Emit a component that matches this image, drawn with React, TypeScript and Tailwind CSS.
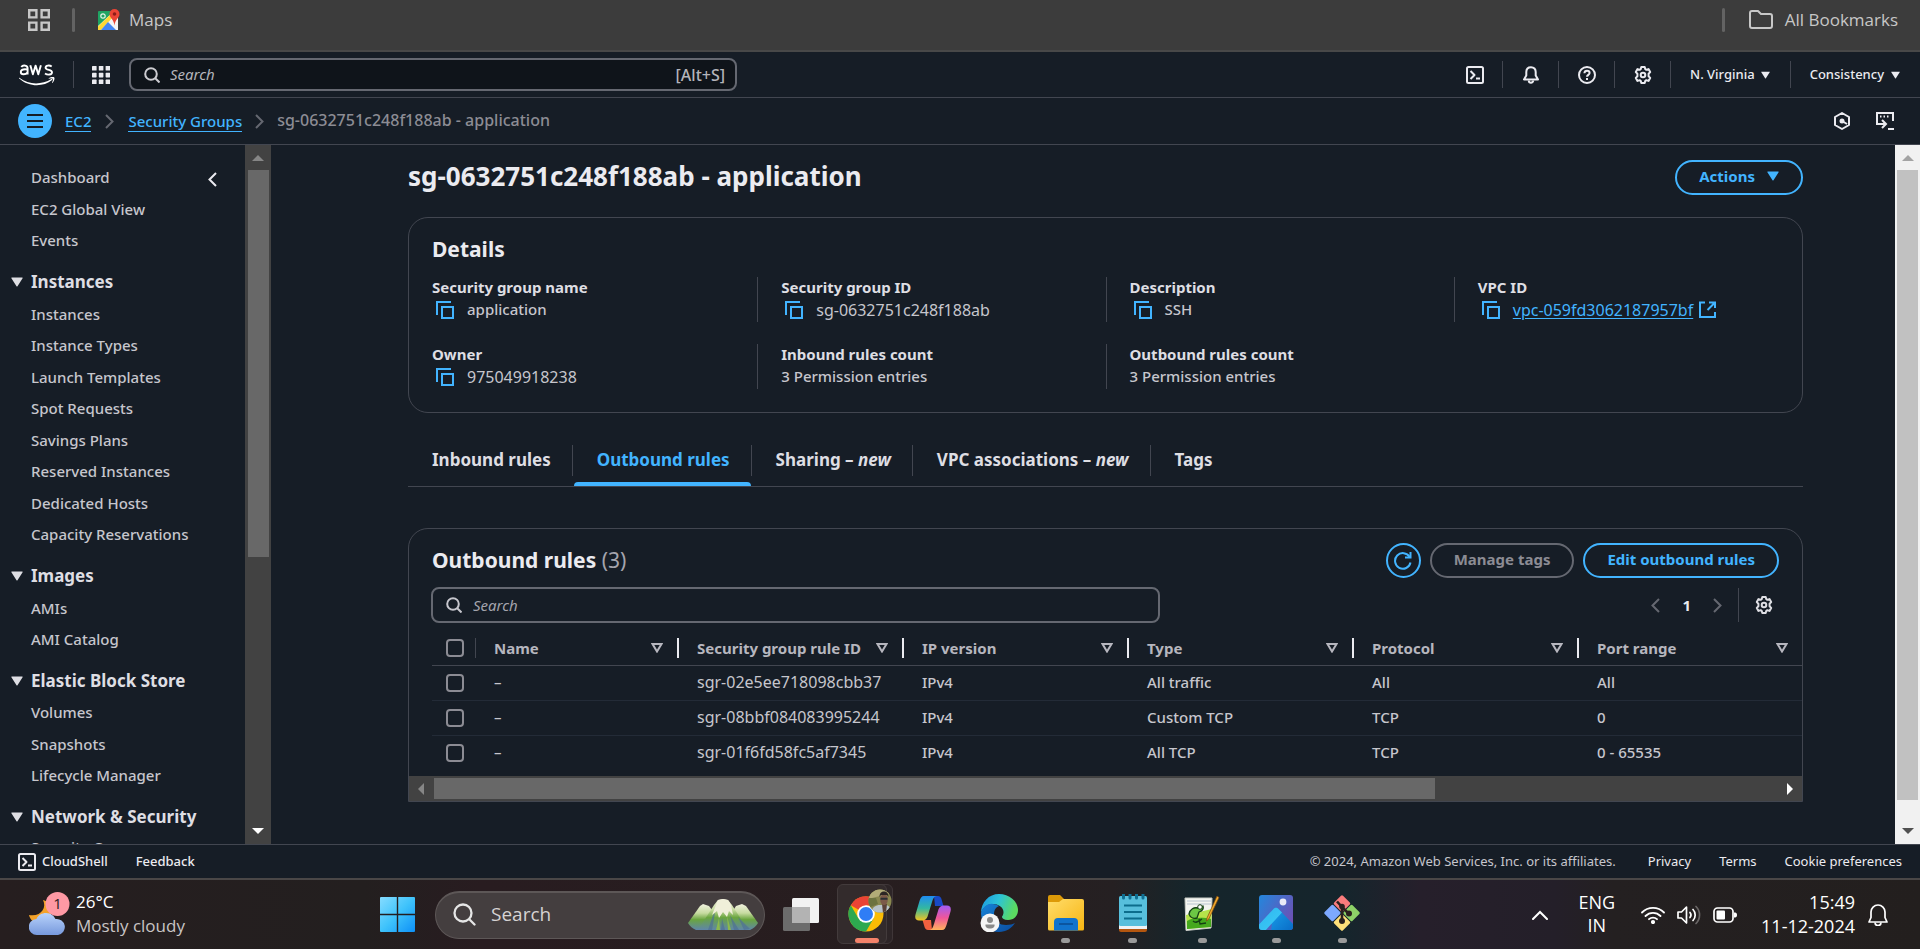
import React from "react";

const navGroups = [
  {
    title: "Instances",
    height: "h-[252px]",
    items: [
      "Instances",
      "Instance Types",
      "Launch Templates",
      "Spot Requests",
      "Savings Plans",
      "Reserved Instances",
      "Dedicated Hosts",
      "Capacity Reservations",
    ],
  },
  { title: "Images", height: "h-[63px]", items: ["AMIs", "AMI Catalog"] },
  { title: "Elastic Block Store", height: "h-[94px]", items: ["Volumes", "Snapshots", "Lifecycle Manager"] },
  { title: "Network & Security", height: "h-[28px]", items: ["Security Groups"] },
];

const columns = ["Name", "Security group rule ID", "IP version", "Type", "Protocol", "Port range"];

const rules = [
  ["–", "sgr-02e5ee718098cbb37", "IPv4", "All traffic", "All", "All"],
  ["–", "sgr-08bbf084083995244", "IPv4", "Custom TCP", "TCP", "0"],
  ["–", "sgr-01f6fd58fc5af7345", "IPv4", "All TCP", "TCP", "0 - 65535"],
];

type IconProps = { className?: string };

function Caret({ className = "" }: IconProps) {
  return (
    <svg viewBox="0 0 12 10" className={className} fill="currentColor" aria-hidden="true">
      <path d="M.8.5h10.4a.5.5 0 0 1 .4.8L6.5 9.2a.6.6 0 0 1-1 0L.4 1.300a.5.5 0 0 1 .4-.8Z" />
    </svg>
  );
}

function ScrollArrow({ className = "" }: IconProps) {
  return (
    <svg viewBox="0 0 12 6" className={className} fill="currentColor" aria-hidden="true">
      <path d="M0 0h12L6 6Z" />
    </svg>
  );
}

function Filter() {
  return (
    <svg viewBox="0 0 12 11" className="h-[11px] w-3 shrink-0" fill="none" stroke="#b6b6be" strokeWidth="2" aria-hidden="true">
      <path d="M1.500 2h9L6 9.500Z" />
    </svg>
  );
}

function SearchIcon({ className = "" }: IconProps) {
  return (
    <svg viewBox="0 0 16 16" className={className} fill="none" stroke="currentColor" strokeWidth="2" aria-hidden="true">
      <circle cx="7" cy="7" r="5.800" />
      <path d="m11 11 4.500 4.500" />
    </svg>
  );
}

function ShellIcon() {
  return (
    <svg viewBox="0 0 18 18" className="size-[18px] shrink-0" fill="none" stroke="currentColor" strokeWidth="2" strokeLinejoin="round" aria-hidden="true">
      <rect x="1" y="1" width="16" height="16" rx="1.500" />
      <path d="m4.500 5 4 4-4 4M10 12.500h4" />
    </svg>
  );
}

function BellIcon() {
  return (
    <svg viewBox="0 0 18 18" className="size-[18px]" fill="none" stroke="currentColor" strokeWidth="2" strokeLinejoin="round" aria-hidden="true">
      <path d="M9 1.200C6 1.200 4.300 3.200 4.300 6v3.500L2 13.500h14l-2.300-4V6C13.700 3.200 12 1.200 9 1.200Z" />
      <path d="M6.800 14.500a2.200 2.200 0 0 0 4.400 0" />
    </svg>
  );
}

function HelpIcon() {
  return (
    <svg viewBox="0 0 18 18" className="size-[18px]" fill="none" stroke="currentColor" strokeWidth="2" aria-hidden="true">
      <circle cx="9" cy="9" r="8" />
      <path d="M6.400 7.200C6.500 5.500 7.600 4.700 9 4.700s2.600.9 2.600 2.300c0 1.800-2.600 1.900-2.600 3.800" />
      <path d="M9 12v2" />
    </svg>
  );
}

function GearIcon() {
  return (
    <svg viewBox="0 0 18 18" className="size-[18px]" fill="none" stroke="currentColor" strokeWidth="2" strokeLinejoin="round" aria-hidden="true">
      <path d="M7.300 1h3.400l.6 2.200 1 .6 2.200-.7 1.700 3-1.600 1.600v2.600l1.600 1.600-1.700 3-2.200-.7-1 .6-.6 2.200H7.300l-.6-2.200-1-.6-2.200.7-1.700-3 1.600-1.600V7.700L1.800 6.100l1.700-3 2.200.7 1-.6Z" />
      <circle cx="9" cy="9" r="2.300" />
    </svg>
  );
}

function Chevron({ className = "", flip = false }: IconProps & { flip?: boolean }) {
  return (
    <svg viewBox="0 0 9 15" className={className} fill="none" stroke="currentColor" strokeWidth="2" aria-hidden="true">
      <path d={flip ? "M8 1 1.500 7.500 8 14" : "m1 1 6.500 6.500L1 14"} />
    </svg>
  );
}

function CopyButton({ label }: { label: string }) {
  return (
    <button type="button" aria-label={label} className="shrink-0 text-[#42b4ff]">
      <svg viewBox="0 0 18 18" className="size-[18px]" fill="none" stroke="currentColor" strokeWidth="2" aria-hidden="true">
        <path d="M1 14V1h14" />
        <path d="M6 6h11v11H6Z" />
      </svg>
    </button>
  );
}

function BookmarksBar() {
  return (
    <div className="flex h-[52px] shrink-0 items-start border-b-2 border-[#484848] bg-[#3c3c3c] pt-2 font-['Open_Sans',sans-serif] text-[17px] leading-6 text-[#c7c7c7]">
      <button type="button" aria-label="Apps" className="ml-7">
        <svg viewBox="0 0 22 22" className="mt-px size-[22px]" fill="none" stroke="#c7c7c7" strokeWidth="2.400" aria-hidden="true">
          <path d="M1.200 1.200h7.200v7.200H1.200ZM13.600 1.200h7.200v7.200h-7.200ZM1.200 13.600h7.200v7.200H1.200ZM13.600 13.600h7.200v7.200h-7.200Z" />
        </svg>
      </button>
      <span className="ml-[22px] h-6 w-[3px] rounded bg-[#636363]" />
      <a href="#maps" className="ml-[23px] flex items-center gap-[9px]">
        <svg viewBox="0 0 22 22" className="size-[22px]" aria-hidden="true">
          <rect x="0" y="2" width="20" height="19" rx="1" fill="#1fa463" />
          <path d="M0 21V17L14 4l6 5v12Z" fill="#f4f4f4" />
          <path d="M0 17.500 13 5l2 3L3 21H0Z" fill="#fdd835" />
          <path d="m3 21 7-8 8 8Z" fill="#4285f4" />
          <circle cx="5" cy="7" r="2.200" fill="none" stroke="#dff3e6" strokeWidth="1.200" />
          <path d="M16.500 0a5 5 0 0 1 5 5c0 4-4.300 5-5 11.500C15.800 10 11.500 9 11.500 5a5 5 0 0 1 5-5Z" fill="#e94435" />
          <circle cx="16.500" cy="5" r="1.800" fill="#8c1d18" />
        </svg>
        Maps
      </a>
      <span className="ml-auto h-6 w-[3px] rounded bg-[#636363]" />
      <a href="#bookmarks" className="mr-[22px] ml-6 flex items-center gap-3">
        <svg viewBox="0 0 24 20" className="h-5 w-6" fill="none" stroke="#c7c7c7" strokeWidth="2" strokeLinejoin="round" aria-hidden="true">
          <path d="M1 3a2 2 0 0 1 2-2h6l3 3h9a2 2 0 0 1 2 2v10a2 2 0 0 1-2 2H3a2 2 0 0 1-2-2Z" />
        </svg>
        All Bookmarks
      </a>
    </div>
  );
}

function AwsNav() {
  const cell = "flex h-[27px] w-14 items-center justify-center border-r border-[#424650]";
  return (
    <header className="flex h-[46px] shrink-0 items-center border-b border-[#424650] text-[13px] text-[#ebebf0]">
      <a href="#home" aria-label="AWS" className="ml-[19px]">
        <svg viewBox="0 0 36 24" className="h-6 w-9" aria-hidden="true">
          <g fill="none" stroke="#fff" strokeWidth="1.900" strokeLinejoin="round">
            <path d="M2.300 4C3.200 2.700 5 2.300 6.500 2.700 8 3 8.600 4 8.600 5.500V11.500M8.600 6.600C6 6 1.800 6.200 1.800 9c0 3 5 3 6.800.2" />
            <path d="m11.300 2.300 2.600 9 2.700-8.700 2.700 8.700 2.600-9" />
            <path d="M32.700 3.500C30.500 2 26.500 2.300 26.600 4.700c.1 2.800 6.400 1.600 6.400 4.500 0 2.800-4.500 3-7 1.200" />
          </g>
          <path d="M.4 14.800c9.600 7.300 22.200 7.200 32 1.200.8-.4 1.400.5.700 1.100C24 24.500 9.500 24 .2 15.500c-.4-.4-.2-.9.2-.7Z" fill="#fff" />
          <path d="M29.700 15.200c1.800-1.300 5-1.500 5.600-.8.6.8-.1 4-1.900 5.500-.3.200-.5.100-.4-.2.500-1.200 1.200-3.300.8-3.800-.5-.6-2.700-.3-3.900-.2-.4 0-.4-.3-.2-.5Z" fill="#fff" />
        </svg>
      </a>
      <span className="ml-[18px] h-[27px] w-px bg-[#424650]" />
      <button type="button" aria-label="Services" className="ml-[18px]">
        <svg viewBox="0 0 18 18" className="size-[18px]" fill="#ebebf0" aria-hidden="true">
          {[0, 6.800, 13.600].map((y) => [0, 6.800, 13.600].map((x) => <rect key={`${x}-${y}`} x={x} y={y} width="4.600" height="4.600" rx=".6" />))}
        </svg>
      </button>
      <label className="ml-[19px] flex h-[33px] w-[608px] items-center rounded-lg border-2 border-[#656871] bg-[#0f141a] pr-2.5 pl-[11px] text-[15px] text-[#b4b4bb]">
        <SearchIcon className="ml-0.5 size-4 shrink-0 text-[#ccccd1]" />
        <input aria-label="Search services" placeholder="Search" className="ml-2.5 min-w-0 flex-1 bg-transparent placeholder:text-[#b4b4bb] placeholder:italic focus:outline-none" />
        <span className="text-base font-medium">[Alt+S]</span>
      </label>
      <div className="ml-auto flex items-center font-medium">
        <button type="button" aria-label="CloudShell" className={cell}><ShellIcon /></button>
        <button type="button" aria-label="Notifications" className={cell}><BellIcon /></button>
        <button type="button" aria-label="Help" className={cell}><HelpIcon /></button>
        <button type="button" aria-label="Settings" className={cell}><GearIcon /></button>
        <button type="button" className="flex h-[27px] items-center gap-1.5 border-r border-[#424650] pr-5 pl-[19px]">
          N. Virginia <Caret className="h-2 w-[9px]" />
        </button>
        <button type="button" className="flex items-center gap-[7px] pr-5 pl-[19px]">
          Consistency <Caret className="h-2 w-[9px]" />
        </button>
      </div>
    </header>
  );
}

function Breadcrumbs() {
  return (
    <nav aria-label="Breadcrumb" className="flex h-[47px] shrink-0 items-center border-b border-[#424650] text-[15px] font-medium text-[#ebebf0]">
      <button type="button" aria-label="Menu" className="ml-[18px] flex size-[34px] items-center justify-center rounded-full bg-[#42b4ff] text-[#161d26]">
        <svg viewBox="0 0 16 14" className="h-[14px] w-4" stroke="currentColor" strokeWidth="2" aria-hidden="true">
          <path d="M0 1h16M0 7h16M0 13h16" />
        </svg>
      </button>
      <a href="#ec2" className="ml-[13px] border-b border-[#42b4ff] leading-5 text-[#42b4ff]">EC2</a>
      <Chevron className="mx-[14px] h-[15px] w-[9px] text-[#656871]" />
      <a href="#groups" className="border-b border-[#42b4ff] leading-5 text-[#42b4ff]">Security Groups</a>
      <Chevron className="mx-[13px] h-[15px] w-[9px] text-[#656871]" />
      <span className="pb-0.5 text-base text-[#8c8c94]">sg-0632751c248f188ab - application</span>
      <button type="button" aria-label="Assistant" className="ml-auto">
        <svg viewBox="0 0 18 18" className="size-[18px]" fill="none" stroke="currentColor" strokeWidth="2" strokeLinejoin="round" aria-hidden="true">
          <path d="m9 1 7 4v8l-7 4-7-4V5Z" />
          <path d="m9 9 5 3" />
          <circle cx="9" cy="9" r="1.500" fill="currentColor" />
        </svg>
      </button>
      <button type="button" aria-label="Open console" className="mr-[26px] ml-[25px]">
        <svg viewBox="0 0 18 18" className="size-[18px]" fill="none" stroke="currentColor" strokeWidth="2" aria-hidden="true">
          <path d="M17 9V1H1v11h8" />
          <path d="M4 4.500h1.500M7.500 4.500H9M11 4.500h1.500" />
          <path d="m6 8 4 4-4 4M12 17h6" />
        </svg>
      </button>
    </nav>
  );
}

function Sidebar() {
  return (
    <div className="flex shrink-0">
      <aside className="w-[245px] overflow-hidden pt-[17px] text-[15px] font-medium text-[#c6c6cd]">
        <div className="flex justify-between pl-[31px]">
          <ul className="grid h-[94px] auto-rows-fr items-center">
            <li><a href="#dashboard">Dashboard</a></li>
            <li><a href="#global">EC2 Global View</a></li>
            <li><a href="#events">Events</a></li>
          </ul>
          <button type="button" aria-label="Collapse navigation" className="mt-[9px] mr-7 h-4 text-[#ebebf0]">
            <Chevron flip className="h-[15px] w-[9px]" />
          </button>
        </div>
        {navGroups.map((group) => (
          <section key={group.title} className="mt-[9px]">
            <button type="button" className="flex h-[33px] w-full items-center gap-2 pl-[11px] text-[17px] font-bold text-[#dedee3]">
              <Caret className="h-[10px] w-3" />
              {group.title}
            </button>
            <ul className={`grid auto-rows-fr items-center pl-[31px] ${group.height}`}>
              {group.items.map((item) => (
                <li key={item}><a href={`#${item}`}>{item}</a></li>
              ))}
            </ul>
          </section>
        ))}
      </aside>
      <div className="flex w-[26px] flex-col items-center bg-[#424242] py-[10px]">
        <ScrollArrow className="h-1.5 w-3 shrink-0 rotate-180 text-[#868686]" />
        <div className="mt-[9px] h-[387px] w-[21px] bg-[#686868]" />
        <ScrollArrow className="mt-auto h-1.5 w-3 shrink-0 text-white" />
      </div>
    </div>
  );
}

function Detail({ label, divided = false, children }: { label: string; divided?: boolean; children: React.ReactNode }) {
  return (
    <div className={`h-[45px] pl-[23px] ${divided ? "border-l border-[#424650]" : ""}`}>
      <dt className="font-bold leading-5 text-[#dedee3]">{label}</dt>
      <dd className="flex h-[25px] items-center font-medium">{children}</dd>
    </div>
  );
}

function Details() {
  const value = "flex items-center gap-[13px] pl-1";
  return (
    <section className="mt-[22px] rounded-[20px] border border-[#424650] pt-[19px] pb-[23px]">
      <h2 className="pl-[23px] text-[21px] leading-6 font-bold text-[#ebebf0]">Details</h2>
      <dl className="mt-4 grid grid-cols-4 gap-y-[22px]">
        <Detail label="Security group name">
          <span className={value}><CopyButton label="Copy name" />application</span>
        </Detail>
        <Detail label="Security group ID" divided>
          <span className={`${value} text-base font-normal`}><CopyButton label="Copy ID" />sg-0632751c248f188ab</span>
        </Detail>
        <Detail label="Description" divided>
          <span className={value}><CopyButton label="Copy description" />SSH</span>
        </Detail>
        <Detail label="VPC ID" divided>
          <span className={`${value} text-base font-normal`}>
            <CopyButton label="Copy VPC ID" />
            <a href="#vpc" className="flex items-center gap-1.5 text-[#42b4ff] underline underline-offset-2">
              vpc-059fd3062187957bf
              <svg viewBox="0 0 17 17" className="size-[17px]" fill="none" stroke="currentColor" strokeWidth="2" aria-hidden="true">
                <path d="M6 1.500H1V16h15v-5" />
                <path d="M10 1.500h6V7M16 1.500 8.500 9" />
              </svg>
            </a>
          </span>
        </Detail>
        <Detail label="Owner">
          <span className={`${value} text-base font-normal`}><CopyButton label="Copy owner" />975049918238</span>
        </Detail>
        <Detail label="Inbound rules count" divided>3 Permission entries</Detail>
        <Detail label="Outbound rules count" divided>3 Permission entries</Detail>
      </dl>
    </section>
  );
}

function Tabs() {
  const tab = "relative flex h-[50px] items-center pr-[22px] pb-0.5 pl-6 after:absolute after:top-[9px] after:right-0 after:h-[31px] after:w-px after:bg-[#424650]";
  return (
    <div role="tablist" className="mt-[23px] flex border-b border-[#424650] text-[17px] font-bold text-[#dedee3]">
      <button type="button" role="tab" className={tab}>Inbound rules</button>
      <button type="button" role="tab" aria-selected="true" className={`${tab} text-[#42b4ff]`}>
        Outbound rules
        <span className="absolute inset-x-px bottom-0 h-1 rounded-t bg-[#42b4ff]" />
      </button>
      <button type="button" role="tab" className={tab}>
        <span>Sharing – <em>new</em></span>
      </button>
      <button type="button" role="tab" className={tab}>
        <span>VPC associations – <em>new</em></span>
      </button>
      <button type="button" role="tab" className="px-6 pb-0.5">Tags</button>
    </div>
  );
}

function Rules() {
  const box = "block size-[18px] appearance-none rounded-[4px] border-2 border-[#8c8c94]";
  return (
    <section className="mt-[41px] overflow-hidden rounded-t-[20px] border border-[#424650]">
      <div className="flex items-center gap-[9px] pt-[14px] pr-[23px] pl-[23px] text-[15px] font-bold">
        <h2 className="mr-auto pb-0.5 text-[21px] leading-7 text-[#ebebf0]">
          Outbound rules <span className="font-normal text-[#a4a4ad]">(3)</span>
        </h2>
        <button type="button" aria-label="Refresh" className="flex size-[35px] items-center justify-center rounded-full border-2 border-[#42b4ff] text-[#42b4ff]">
          <svg viewBox="0 0 18 18" className="size-[18px]" fill="none" stroke="currentColor" strokeWidth="2" aria-hidden="true">
            <path d="M16.500 10.500A7.800 7.800 0 1 1 15.600 5" />
            <path d="M11 5.500h5.500V0" />
          </svg>
        </button>
        <button type="button" className="h-[35px] rounded-full border-2 border-[#656871] px-[22px] pb-0.5 text-[#8c8c94]">Manage tags</button>
        <button type="button" className="h-[35px] rounded-full border-2 border-[#42b4ff] px-[22px] pb-0.5 text-[#42b4ff]">Edit outbound rules</button>
      </div>
      <div className="mt-[9px] flex items-center pr-[29px] pl-[22px]">
        <label className="flex h-9 min-w-0 basis-[729px] items-center rounded-lg border-2 border-[#656871] px-[13px] text-[#a4a4ad]">
          <SearchIcon className="size-4 shrink-0 text-[#c6c6cd]" />
          <input aria-label="Search rules" placeholder="Search" className="ml-[11px] min-w-0 flex-1 bg-transparent placeholder:text-[#a4a4ad] placeholder:italic focus:outline-none" />
        </label>
        <button type="button" aria-label="Previous page" className="ml-auto text-[#656871]"><Chevron flip className="h-[15px] w-[9px]" /></button>
        <button type="button" className="mx-[22px] font-bold text-[#ebebf0]">1</button>
        <button type="button" aria-label="Next page" className="text-[#656871]"><Chevron className="h-[15px] w-[9px]" /></button>
        <span className="mr-4 ml-4 h-[34px] w-px bg-[#424650]" />
        <button type="button" aria-label="Preferences" className="text-[#dedee3]"><GearIcon /></button>
      </div>
      <div className="mt-2 pl-[23px]">
        <table className="w-full table-fixed border-collapse text-left">
          <colgroup>
            <col className="w-[44px]" />
            <col className="w-[203px]" />
            <col className="w-[225px]" />
            <col className="w-[225px]" />
            <col className="w-[225px]" />
            <col className="w-[225px]" />
            <col />
          </colgroup>
          <thead>
            <tr className="h-[34px] border-b border-[#424650] text-[#b6b6be]">
              <th className="p-0">
                <div className="flex h-5 items-center border-r border-[#424650] pl-[14px]">
                  <input type="checkbox" aria-label="Select all rules" className={box} />
                </div>
              </th>
              {columns.map((c, i) => (
                <th key={c} className="p-0 font-bold">
                  <div className={`flex h-5 items-center justify-between pr-[14px] pl-[18px] ${i < columns.length - 1 ? "border-r-2 border-[#ebebf0]" : ""}`}>
                    {c}
                    <Filter />
                  </div>
                </th>
              ))}
            </tr>
          </thead>
          <tbody className="font-medium">
            {rules.map((row) => (
              <tr key={row[1]} className="h-[35px] border-b border-[#232b37] last:border-b-0">
                <td className="p-0 pl-[14px]">
                  <input type="checkbox" aria-label={`Select ${row[1]}`} className={box} />
                </td>
                {row.map((value, i) => (
                  <td key={columns[i]} className={i === 1 ? "p-0 pb-px pl-[18px] text-base font-normal" : "p-0 pb-px pl-[18px]"}>{value}</td>
                ))}
              </tr>
            ))}
          </tbody>
        </table>
      </div>
      <div className="mt-1.5 flex h-[25px] items-center bg-[#424242] px-[9px]">
        <svg viewBox="0 0 6 12" className="mr-[10px] h-3 w-1.5" fill="#868686" aria-hidden="true"><path d="M6 0v12L0 6Z" /></svg>
        <div className="mr-auto h-[21px] w-[72.8%] bg-[#686868]" />
        <svg viewBox="0 0 6 12" className="h-3 w-1.5" fill="#fff" aria-hidden="true"><path d="M0 0v12l6-6Z" /></svg>
      </div>
    </section>
  );
}

function ConsoleFooter() {
  return (
    <footer className="flex h-[36px] shrink-0 items-center border-t border-b-2 border-t-[#424650] border-b-[#4a4747] px-[18px] text-[13px] text-[#ebebf0]">
      <button type="button" className="flex items-center gap-1.5 font-medium"><ShellIcon />CloudShell</button>
      <button type="button" className="ml-7 font-medium">Feedback</button>
      <span className="ml-auto text-[#c6c6cd]">© 2024, Amazon Web Services, Inc. or its affiliates.</span>
      <a href="#privacy" className="ml-8">Privacy</a>
      <a href="#terms" className="ml-7">Terms</a>
      <a href="#cookies" className="ml-7">Cookie preferences</a>
    </footer>
  );
}

function ChromeArt() {
  return (
    <svg viewBox="0 0 50 60" className="h-[60px] w-[50px] overflow-visible" aria-hidden="true">
      <circle cx="28" cy="31" r="17.500" fill="#fbbc05" />
      <path d="M28 31 12.800 22.200A17.500 17.500 0 0 1 43.200 22.200L28 22.500Z" fill="#ea4335" />
      <path d="M12.800 22.200A17.500 17.500 0 0 0 28 48.500l7.500-13-15 0Z" fill="#2da94f" />
      <circle cx="28" cy="31" r="8.800" fill="#fff" />
      <circle cx="28" cy="31" r="7" fill="#2f7df6" />
      <clipPath id="avatar"><circle cx="42" cy="18" r="11.500" /></clipPath>
      <g clipPath="url(#avatar)">
        <path d="M30 6h24v24H30Z" fill="#8a8850" />
        <path d="M30 6h18l6 4-24 6Z" fill="#b2ac78" />
        <path d="M30 15h8l2 6-10 4Z" fill="#6c7340" />
        <path d="M33 30c1-6 5-8 9-8h5c4 0 6 3 7 8Z" fill="#b8c3c9" />
        <path d="M44 21h5l-1 9h-3Z" fill="#5b4238" />
        <ellipse cx="46" cy="16.500" rx="3.800" ry="5.500" fill="#7c5a49" />
        <path d="M41.500 14c0-4 2-5.500 4.500-5.500s4.500 1.500 4.500 5.500l-1.500-2h-6Z" fill="#2c2624" />
        <path d="M42.500 14.800h7v2h-7Z" fill="#2b2f33" />
      </g>
    </svg>
  );
}

function CopilotArt() {
  return (
    <svg viewBox="0 0 36 36" className="size-9" aria-hidden="true">
      <defs>
        <linearGradient id="cpA" x1="0" y1="0" x2="0" y2="1"><stop offset="0" stopColor="#1f8df2" /><stop offset=".5" stopColor="#33b8a0" /><stop offset="1" stopColor="#f2c521" /></linearGradient>
        <linearGradient id="cpB" x1="0" y1="0" x2="0" y2="1"><stop offset="0" stopColor="#a05cf5" /><stop offset=".5" stopColor="#f0569a" /><stop offset="1" stopColor="#ffb35c" /></linearGradient>
      </defs>
      <path d="M19 1h4c2 0 3 1.500 3.600 3.500L28.500 11H20Z" fill="#1849c6" />
      <path d="M17 35h-4c-2 0-3-1.500-3.600-3.500L7.500 25H16Z" fill="#f0603f" />
      <path d="M9 1h13c-3 0-4 3-5 6l-4 13c-1 4-3 5.500-6 5.500H4c-3 0-4.500-2-3.500-6L4.500 6C5.500 3 6.500 1 9 1Z" fill="url(#cpA)" />
      <path d="M27 35H14c3 0 4-3 5-6l4-13c1-4 3-5.500 6-5.500h3c3 0 4.500 2 3.500 6l-4 13.500c-1 3-2 5-4.500 5Z" fill="url(#cpB)" />
    </svg>
  );
}

function EdgeArt() {
  return (
    <svg viewBox="0 0 38 38" className="size-[38px]" aria-hidden="true">
      <defs>
        <linearGradient id="edA" x1="0" y1="0" x2="1" y2=".3"><stop offset="0" stopColor="#1b95e0" /><stop offset=".5" stopColor="#2cc3d8" /><stop offset="1" stopColor="#5bdb60" /></linearGradient>
        <linearGradient id="edB" x1="0" y1="0" x2="1" y2="1"><stop offset="0" stopColor="#1683d8" /><stop offset="1" stopColor="#0b4a9c" /></linearGradient>
      </defs>
      <path d="M1 19C1 8 9 0 19 0s19 7 19 16c0 6-4 10-10 10-4 0-6-1.500-6-3 0-1 1.500-1.500 1.500-5C23.500 13 18 10 13 10S3 13 1 19Z" fill="url(#edA)" />
      <path d="M1 19c2-7 8-10 12-9 4 .5 6 2 6 2-4 1.500-5 5-5 9 0 7 6 10 12 10 4 0 7-1 9-2-3 5-9 9-16 9C9 38 1 30 1 19Z" fill="url(#edB)" />
      <circle cx="10" cy="29" r="9.500" fill="#f5f5f5" />
      <circle cx="10" cy="26" r="3" fill="#8a8a8a" />
      <path d="M5.500 30.500h9c.5 2.500-1.500 4-4.500 4s-5-1.500-4.500-4Z" fill="#8a8a8a" />
    </svg>
  );
}

function FolderArt() {
  return (
    <svg viewBox="0 0 36 36" className="size-9" aria-hidden="true">
      <defs><linearGradient id="flA" x1="0" y1="0" x2="1" y2="1"><stop offset="0" stopColor="#ffdd6b" /><stop offset="1" stopColor="#f7b512" /></linearGradient></defs>
      <path d="M0 2a2 2 0 0 1 2-2h10l4 4v6H0Z" fill="#dd9a08" />
      <path d="M0 7h11l4-3h19a2 2 0 0 1 2 2v28a1.500 1.500 0 0 1-1.500 1.500h-33A1.500 1.500 0 0 1 0 34Z" fill="url(#flA)" />
      <path d="M6 35.500V27a4 4 0 0 1 4-4h16a4 4 0 0 1 4 4v8.500Z" fill="#1173cd" />
      <path d="M11 29h14" stroke="#0a4b91" strokeWidth="1.500" />
    </svg>
  );
}

function NotepadArt() {
  return (
    <svg viewBox="0 0 28 38" className="h-[38px] w-7" aria-hidden="true">
      <rect x="0" y="30" width="28" height="8" rx="2" fill="#b4560f" />
      <rect x="0" y="28" width="28" height="7" fill="#eef2f4" />
      <rect x="0" y="2" width="28" height="30" rx="1.500" fill="#57bfdc" />
      <path d="M5 11.500h18M5 18h18M5 24.500h18" stroke="#0c6d8c" strokeWidth="2" />
      <path d="M4.500 0v4M11 0v4M17.500 0v4M24 0v4" stroke="#0f6f92" strokeWidth="3" strokeLinecap="round" />
    </svg>
  );
}

function NppArt() {
  return (
    <svg viewBox="0 0 36 36" className="size-9" aria-hidden="true">
      <path d="M1 3h27l-1 30-25 2.500Z" fill="#f3f5f0" stroke="#c9ccc6" />
      <path d="M2 20 28 14l-1 18-24 2Z" fill="#b5e34a" />
      <path d="M3 26c6-4 16-4 24-2v8L3 34Z" fill="#45a81d" />
      <path d="M3 6h24M3 9h24" stroke="#b9c4d0" />
      <path d="M5 19c1-5 5-7 9-6l5-2c1 3-1 5-4 6l-2 6c-4 1-7-1-8-4Z" fill="#6cc644" stroke="#143f14" strokeWidth="1.300" />
      <circle cx="16" cy="12" r="2.300" fill="#fff" stroke="#143f14" />
      <path d="M9 26c3 3 6 0 9-2M15 24l1 5 6-1" fill="none" stroke="#143f14" strokeWidth="1.300" />
      <path d="M33 1 23 23l-.5 3 2.300-2L35 2.500Z" fill="#f0a92c" stroke="#7b4710" strokeWidth=".7" />
    </svg>
  );
}

function PhotosArt() {
  return (
    <svg viewBox="0 0 34 36" className="h-9 w-[34px]" aria-hidden="true">
      <defs>
        <linearGradient id="phA" x1="0" y1="0" x2="1" y2=".6"><stop offset="0" stopColor="#2387dd" /><stop offset="1" stopColor="#6b52b5" /></linearGradient>
        <linearGradient id="phB" x1="0" y1="0" x2="1" y2="1"><stop offset="0" stopColor="#2fb6ee" /><stop offset="1" stopColor="#3ccbf7" /></linearGradient>
        <linearGradient id="phC" x1="0" y1="0" x2="1" y2="1"><stop offset="0" stopColor="#1aa0ea" /><stop offset="1" stopColor="#0868c4" /></linearGradient>
        <clipPath id="phD"><rect width="34" height="35" rx="3" /></clipPath>
      </defs>
      <g clipPath="url(#phD)">
        <rect width="34" height="35" fill="url(#phA)" />
        <circle cx="24" cy="7" r="3.400" fill="#e9eaf7" />
        <path d="M14.500 14a3.500 3.500 0 0 1 5 0L36 31v6H12Z" fill="url(#phC)" />
        <path d="M-2 31.500 14.500 14a3.500 3.500 0 0 1 5 0l3.500 3.500L5 37h-7Z" fill="url(#phB)" />
      </g>
    </svg>
  );
}

function GitArt() {
  return (
    <svg viewBox="0 0 38 38" className="size-[38px]" aria-hidden="true">
      <g transform="rotate(45 19 19)">
        <rect x="6" y="6" width="12.500" height="12.500" rx="1.500" fill="#f97c7c" />
        <rect x="19.500" y="6" width="12.500" height="12.500" rx="1.500" fill="#8ed267" />
        <rect x="6" y="19.500" width="12.500" height="12.500" rx="1.500" fill="#7da9ff" />
        <rect x="19.500" y="19.500" width="12.500" height="12.500" rx="1.500" fill="#ffe07a" />
      </g>
      <path d="M14 7.500 19 13v14M19 13l6 6" fill="none" stroke="#2b211f" strokeWidth="2.600" />
      <circle cx="19" cy="12.500" r="2.800" fill="#2b211f" />
      <circle cx="26" cy="19.500" r="3" fill="#2b211f" />
      <circle cx="19" cy="27" r="3" fill="#2b211f" />
    </svg>
  );
}

function Mountains() {
  return (
    <svg viewBox="0 0 70 32" className="h-8 w-[70px]" aria-hidden="true">
      <defs>
        <linearGradient id="mtA" x1="0" y1="0" x2="0" y2="1">
          <stop offset="0" stopColor="#f1f2df" /><stop offset=".35" stopColor="#c7dba0" /><stop offset=".6" stopColor="#6aa53f" /><stop offset="1" stopColor="#5f86a8" />
        </linearGradient>
      </defs>
      <path d="M0 24 12 7l3-2 6 2 6 8v16H8q-5-2-8-7Z" fill="url(#mtA)" />
      <path d="M70 24 58 7l-4-2-6 2-5 8v16h19q5-2 8-7Z" fill="url(#mtA)" />
      <path d="M10 31 26 6l4-5 5-1 5 1 4 5 16 25Z" fill="url(#mtA)" />
      <path d="m30 1 5-1 5 1 3 5 2 10-4-4-2 6-4-5-4 6-2-7-5 4 4-10Z" fill="#f0efd9" />
      <path d="m20 31 5-15 2-2-3 17ZM33 31l1-12 3 12ZM46 31l-4-15 9 15ZM56 31l-6-13 12 12Z" fill="#4f7196" opacity=".7" />
      <path d="M28 31l3-12 1 12ZM40 31l-1-14 4 14Z" fill="#8bb84c" />
    </svg>
  );
}

const apps = [
  { name: "Chrome", width: "w-[66px]", art: <ChromeArt />, mark: "w-6 bg-[#f4826a]" },
  { name: "Copilot", width: "w-[67px]", art: <CopilotArt />, mark: "" },
  { name: "Edge", width: "w-[66px]", art: <EdgeArt />, mark: "" },
  { name: "File Explorer", width: "w-[67px]", art: <FolderArt />, mark: "w-[9px] bg-[#9a9a9a]" },
  { name: "Notepad", width: "w-[67px]", art: <NotepadArt />, mark: "w-[9px] bg-[#9a9a9a]" },
  { name: "Notepad++", width: "w-[72px]", art: <NppArt />, mark: "w-[9px] bg-[#9a9a9a]" },
  { name: "Photos", width: "w-[76px]", art: <PhotosArt />, mark: "w-[9px] bg-[#9a9a9a]" },
  { name: "Git", width: "w-[56px]", art: <GitArt />, mark: "w-[9px] bg-[#9a9a9a]" },
];

function Taskbar() {
  return (
    <div className="flex h-[69px] shrink-0 items-center bg-[linear-gradient(90deg,#261e1f_0%,#231f1f_19%,#281c20_25%,#271e1f_50%,#252022_58%,#15252b_62%,#15252c_70%,#261f2b_74%,#241f29_81%,#242021_84%,#231f1e_100%)] font-['Open_Sans',sans-serif] text-[17px] text-white">
      <button type="button" className="flex w-[380px] shrink-0 items-center pb-0.5 pl-[29px] text-left">
        <svg viewBox="0 0 42 46" className="h-[46px] w-[42px]" aria-hidden="true">
          <defs>
            <linearGradient id="wcA" x1="0" y1="0" x2="0" y2="1"><stop offset="0" stopColor="#b9d3fb" /><stop offset="1" stopColor="#7799dd" /></linearGradient>
          </defs>
          <path d="M14 9c4 8-2 17-14 15 1 5 5 8 10 8 8 0 14-8 12-15-1-5-4-7-8-8Z" fill="#f3a229" />
          <path d="M8 44a8 8 0 0 1-.5-16C9 24 13 22 17 22c5 0 8 3 9.500 6a8 8 0 1 1 2.500 16Z" fill="url(#wcA)" />
          <circle cx="28.500" cy="13" r="12" fill="#ff99a4" />
          <text x="28.500" y="18" textAnchor="middle" fontSize="15" fill="#2a1a1c">1</text>
        </svg>
        <span className="ml-[5px] leading-6">
          26°C
          <span className="block text-[#c9c5c5]">Mostly cloudy</span>
        </span>
      </button>
      <button type="button" aria-label="Start">
        <svg viewBox="0 0 35 35" className="size-[35px]" aria-hidden="true">
          <defs><linearGradient id="wnA" x1="0" y1="0" x2="35" y2="35" gradientUnits="userSpaceOnUse"><stop offset="0" stopColor="#86dcff" /><stop offset=".5" stopColor="#3fc3fb" /><stop offset="1" stopColor="#0d90f7" /></linearGradient></defs>
          <path d="M1 0h15.800v16.800H0V1a1 1 0 0 1 1-1ZM18.200 0H34a1 1 0 0 1 1 1v15.800H18.200ZM0 18.200h16.800V35H1a1 1 0 0 1-1-1ZM18.200 18.200H35V34a1 1 0 0 1-1 1H18.200Z" fill="url(#wnA)" />
        </svg>
      </button>
      <label className="ml-5 flex h-12 w-[330px] shrink-0 items-center rounded-full border border-t-2 border-[#5d5757] bg-[#443e3f] pr-1.5 pb-px pl-[17px]">
        <svg viewBox="0 0 23 23" className="size-[23px] shrink-0" fill="none" stroke="#e6e6e6" strokeWidth="2.300" strokeLinecap="round" aria-hidden="true">
          <circle cx="10" cy="10" r="8.500" />
          <path d="m16.500 16.500 5 5" />
        </svg>
        <input aria-label="Search Windows" placeholder="Search" className="ml-[15px] min-w-0 flex-1 bg-transparent text-[19px] placeholder:text-[#d6d3d3] focus:outline-none" />
        <Mountains />
      </label>
      <button type="button" aria-label="Task view" className="ml-[18px]">
        <svg viewBox="0 0 36 35" className="h-[35px] w-9" aria-hidden="true">
          <rect x="9" y="1" width="27" height="25" rx="1.500" fill="#f2f2f2" />
          <rect x="0" y="10" width="27" height="24" rx="1.500" fill="#6c6c6c" />
          <path d="M9 10h18v16H9Z" fill="#b3b3b3" />
        </svg>
      </button>
      <div className="ml-[14px] flex h-full">
        {apps.map((app, i) => (
          <button key={app.name} type="button" aria-label={app.name} className={`relative flex items-center justify-center ${app.width}`}>
            {i === 0 && (
              <>
                <span className="absolute top-1 left-3 h-[60px] w-[48px] rounded-md border border-[#3f3638] bg-[#2d2527]" />
                <span className="absolute top-1 left-1 h-[60px] w-[50px] rounded-md border border-[#433b3c] bg-[#332b2c]" />
              </>
            )}
            <span className={i === 0 ? "relative mr-1.5 -mt-1" : "-mt-1"}>{app.art}</span>
            {app.mark && (
              <span className={`absolute bottom-[6px] h-[5px] rounded-full ${app.mark} ${i === 0 ? "left-[22px]" : ""}`} />
            )}
          </button>
        ))}
      </div>
      <button type="button" aria-label="Show hidden icons" className="ml-auto">
        <svg viewBox="0 0 16 10" className="h-[10px] w-4" fill="none" stroke="#fff" strokeWidth="2" strokeLinecap="round" aria-hidden="true"><path d="m1 9 7-7 7 7" /></svg>
      </button>
      <button type="button" className="ml-[30px] pb-0.5 text-center text-lg leading-[23px]">ENG<br />IN</button>
      <button type="button" aria-label="Network, sound and battery" className="ml-[26px] flex items-center gap-3">
        <svg viewBox="0 0 24 18" className="h-[18px] w-6" fill="none" stroke="#fff" strokeWidth="1.800" strokeLinecap="round" aria-hidden="true">
          <path d="M1 6.500a15.500 15.500 0 0 1 22 0M4.500 10a10.600 10.600 0 0 1 15 0M8 13.200a5.700 5.700 0 0 1 8 0" />
          <circle cx="12" cy="16" r="1.200" fill="#fff" />
        </svg>
        <svg viewBox="0 0 24 20" className="h-5 w-6" fill="none" stroke="#fff" strokeWidth="1.700" strokeLinecap="round" strokeLinejoin="round" aria-hidden="true">
          <path d="M1 7v6h3.500l5 5V2l-5 5Z" />
          <path d="M13 7.500a4 4 0 0 1 0 5M16 4.500a8 8 0 0 1 0 11" />
          <path d="M19 1.500a12 12 0 0 1 0 17" stroke="#6b6767" />
        </svg>
        <svg viewBox="0 0 24 16" className="h-4 w-6" aria-hidden="true">
          <rect x="1" y="1" width="19" height="14" rx="3.500" fill="none" stroke="#fff" strokeWidth="1.700" />
          <rect x="3.500" y="3.500" width="8.500" height="9" rx="1" fill="#fff" />
          <path d="M21 5.500c2 0 3 .5 3 2.500s-1 2.500-3 2.500Z" fill="#fff" />
        </svg>
      </button>
      <button type="button" className="ml-6 pb-0.5 text-right text-lg leading-6">15:49<br />11-12-2024</button>
      <button type="button" aria-label="Notifications" className="mr-[32px] ml-[13px]">
        <svg viewBox="0 0 20 22" className="h-[22px] w-5" fill="none" stroke="#fff" strokeWidth="1.700" strokeLinejoin="round" aria-hidden="true">
          <path d="M10 1a7 7 0 0 0-7 7v5.500L1 18h18l-2-4.500V8a7 7 0 0 0-7-7Z" />
          <path d="M7 18.500a3 3 0 0 0 6 0" />
        </svg>
      </button>
    </div>
  );
}

export default function App() {
  return (
    <div className="flex h-screen flex-col overflow-hidden bg-[#161d26] font-['Noto_Sans',sans-serif] text-[15px] text-[#c6c6cd]">
      <BookmarksBar />
      <AwsNav />
      <Breadcrumbs />
      <div className="flex min-h-0 flex-1">
        <Sidebar />
        <main className="min-w-0 flex-1 overflow-hidden pt-[14px] pr-[92px] pl-[137px]">
          <div className="flex h-9 items-center justify-between">
            <h1 className="pb-0.5 text-[26px] leading-8 font-bold text-[#ebebf0]">sg-0632751c248f188ab - application</h1>
            <button type="button" className="flex h-[35px] items-center gap-3 rounded-full border-2 border-[#42b4ff] px-[22px] pb-0.5 font-bold text-[#42b4ff]">
              Actions <Caret className="h-[10px] w-3" />
            </button>
          </div>
          <Details />
          <Tabs />
          <Rules />
        </main>
        <div className="flex w-[25px] shrink-0 flex-col items-center bg-[#f1f1f1] py-[10px]">
          <ScrollArrow className="h-1.5 w-3 shrink-0 rotate-180 text-[#a3a3a3]" />
          <div className="mt-[9px] h-[630px] w-[21px] bg-[#c1c1c1]" />
          <ScrollArrow className="mt-auto h-1.5 w-3 shrink-0 text-[#505050]" />
        </div>
      </div>
      <ConsoleFooter />
      <Taskbar />
    </div>
  );
}
